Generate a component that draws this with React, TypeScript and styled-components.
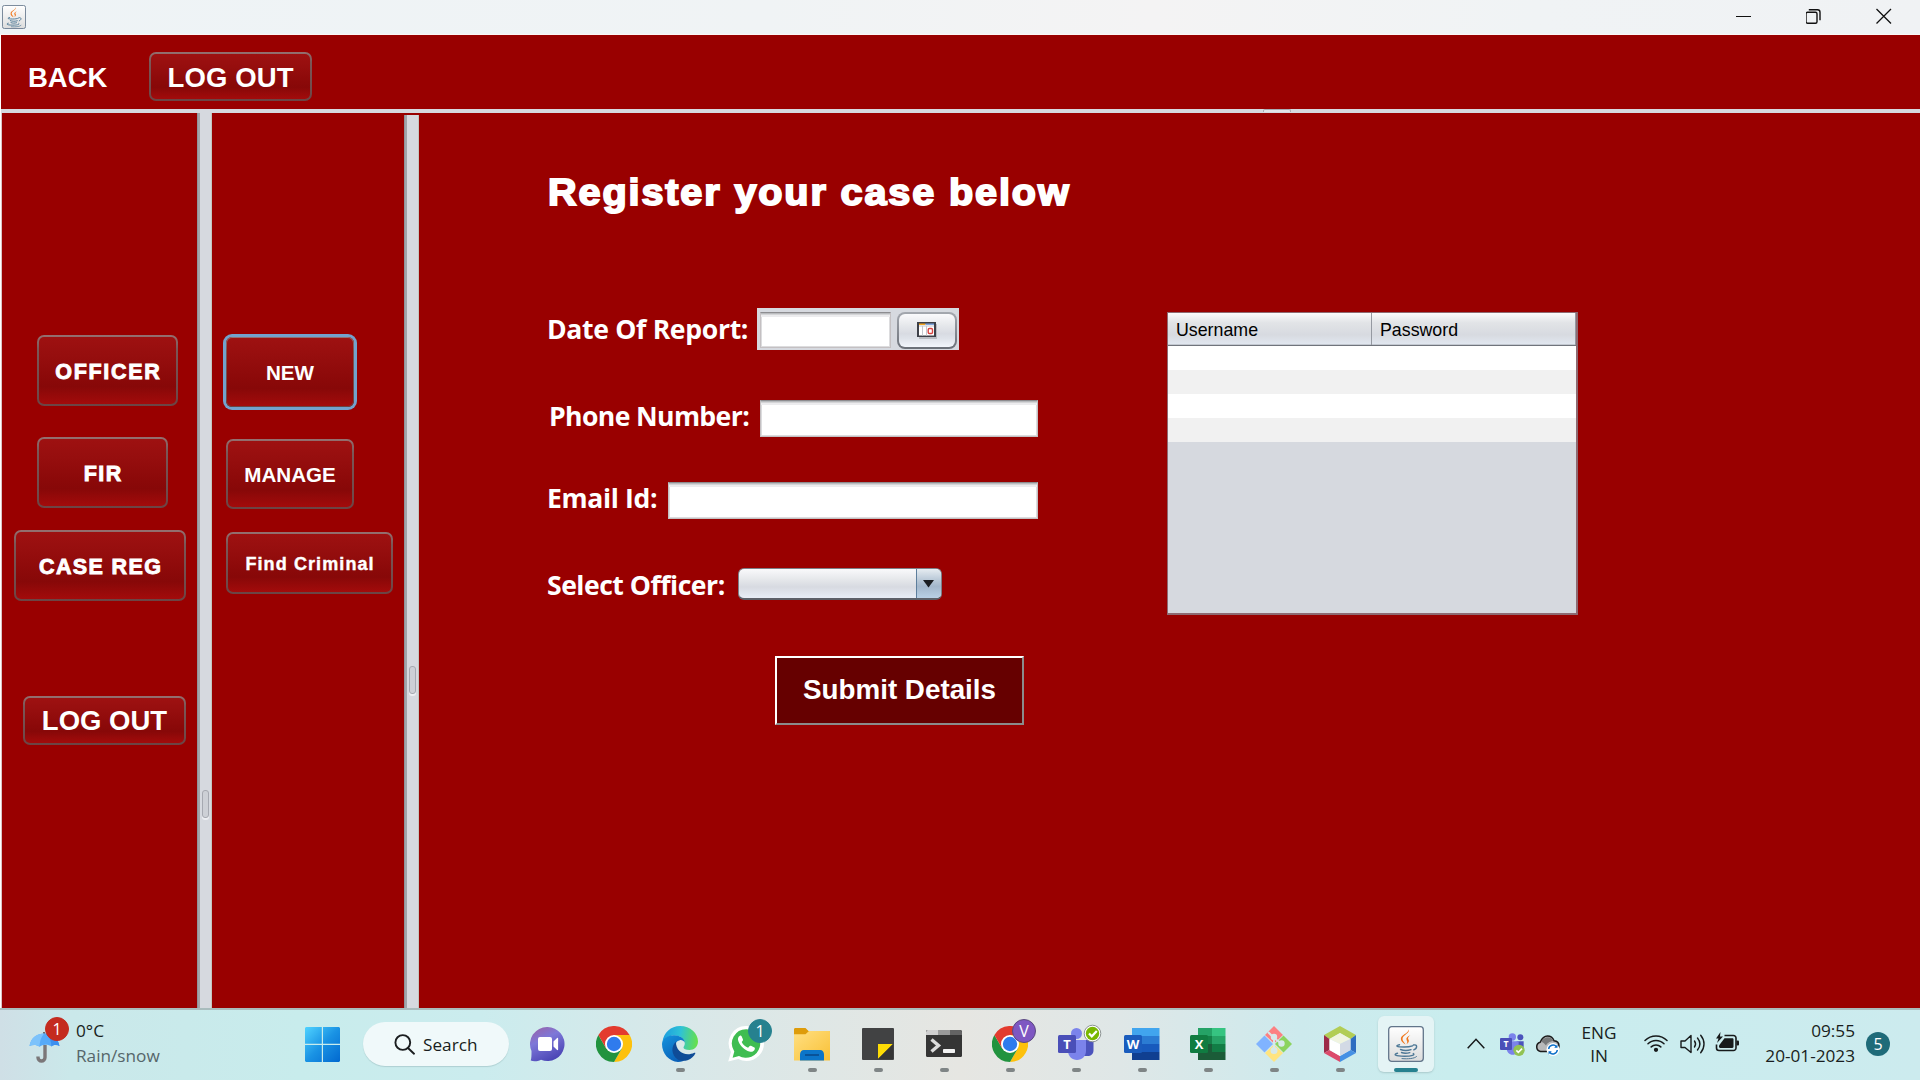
import React from 'react';
import styled, { createGlobalStyle, css } from 'styled-components';

const RED = '#990000';
const CHROME = '#d6d9df';
const ARIAL = "'Liberation Sans', Arial, sans-serif";
const SEGOE = "'Open Sans', 'Noto Sans', sans-serif";

const GlobalStyle = createGlobalStyle`
  * { box-sizing: border-box; }
  html, body { margin: 0; padding: 0; background: #fff; }
  body { width: 1920px; height: 1080px; overflow: hidden; }
  svg { display: block; flex: none; }
  button { margin: 0; font: inherit; }
`;

const Screen = styled.div`
  width: 1920px;
  height: 1080px;
  display: flex;
  flex-direction: column;
  overflow: hidden;
`;

/* ---------- window chrome ---------- */

const TitleBar = styled.header`
  height: 35px;
  flex: none;
  display: flex;
  justify-content: space-between;
  padding: 5px 28px 0 2px;
  background: linear-gradient(90deg, #eef3f6 0%, #f0f3f5 40%, #f4f3f4 60%, #f0f3f5 80%, #f0f2f4 100%);
  border-bottom: 1px solid #fbf6f6;
`;

const WindowControls = styled.div`
  display: flex;
  gap: 54px;
  padding-top: 3px;
`;

const ToolBar = styled.div`
  height: 74px;
  flex: none;
  display: flex;
  margin-left: 1px;
  padding: 17px 0 0 27px;
  background: ${RED};
`;

const BackLabel = styled.div`
  width: 121px;
  color: #fff;
  font: bold 27.5px/51px ${ARIAL};
`;

const HorizontalSplit = styled.div`
  height: 4px;
  flex: none;
  margin-left: 1px;
  padding-left: 1262px;
  background: ${CHROME};
`;

const HorizontalGrip = styled.div`
  width: 28px;
  height: 3px;
  border: 1px solid #a9acb3;
  border-bottom: 0;
  border-radius: 2px 2px 0 0;
  background: #e2e4e8;
`;

const Workspace = styled.div`
  height: 895px;
  flex: none;
  display: flex;
  padding-left: 2px;
  background: ${RED};
  box-shadow: inset 1px 0 #fff, inset 2px 0 #d9c4c6;
`;

const SideColumn = styled.nav<{ $width: number }>`
  width: ${p => p.$width}px;
  flex: none;
  display: flex;
  flex-direction: column;
  align-items: flex-start;
  padding-top: 222px;
`;

const Splitter = styled.div<{ $top: number; $grip: number }>`
  width: 15px;
  flex: none;
  margin-top: ${p => p.$top}px;
  padding: ${p => p.$grip}px 0 0 5px;
  background: linear-gradient(90deg, #91949b 0 1px, #a2a5ab 1px 3px, ${CHROME} 3px 14px, #c4c6bf 14px 15px);
`;

const Grip = styled.div`
  width: 7px;
  height: 28px;
  border: 1.500px solid #a6a9b1;
  border-radius: 3px;
  background: #cdd0d6;
  box-shadow: 0 2px 0 #eceef2;
`;

const FACE = {
  plain: css`font-weight: bold;`,
  black: css`font-weight: bold; -webkit-text-stroke: 0.9px #fff;`,
  blackSmall: css`font-weight: bold; -webkit-text-stroke: 0.4px #fff;`,
};

const GlassButton = styled.button<{
  $w: number; $h: number; $ml?: number; $mt?: number; $size: number;
  $face?: 'plain' | 'black' | 'blackSmall'; $spacing?: number; $focus?: boolean; $lift?: number;
}>`
  width: ${p => p.$w}px;
  height: ${p => p.$h}px;
  flex: none;
  margin: ${p => p.$mt ?? 0}px 0 0 ${p => p.$ml ?? 0}px;
  padding: ${p => p.$lift ?? 2}px 0 0 ${p => p.$spacing ?? 0}px;
  display: flex;
  align-items: center;
  justify-content: center;
  white-space: nowrap;
  color: #fff;
  font-family: ${ARIAL};
  font-size: ${p => p.$size}px;
  letter-spacing: ${p => p.$spacing ?? 0}px;
  ${p => FACE[p.$face ?? 'plain']}
  border: 2px solid transparent;
  border-radius: 7px;
  background:
    linear-gradient(180deg, #9e1111 0%, #960e0e 28%, #8b0909 62%, #870808 74%, #a30b0b 100%) padding-box,
    linear-gradient(180deg, #957070 0%, #7b5656 20%, #704a4a 80%, #6b4444 100%) border-box;
  ${p => p.$focus && css`
    margin-left: ${(p.$ml ?? 0) + 2}px;
    margin-top: ${(p.$mt ?? 0) + 2}px;
    border-width: 1px;
    box-shadow: 0 0 0 3px #72a2cd;
    border-radius: 6px;
  `}
`;

/* ---------- registration form ---------- */

const Content = styled.main`
  flex: 1;
  padding: 58px 0 0 128px;
`;

const Heading = styled.h1`
  width: 640px;
  margin: 0;
  padding-left: 1px;
  color: #fff;
  font: bold 36px/44px ${ARIAL};
  letter-spacing: 1.7px;
  white-space: nowrap;
  -webkit-text-stroke: 1.8px #fff;
  transform: scaleX(1.1);
  transform-origin: left;
`;

const Panels = styled.div`
  display: flex;
  align-items: flex-start;
  gap: 129px;
  margin-top: 93px;
`;

const Form = styled.div`
  width: 491px;
  display: flex;
  flex-direction: column;
`;

const Row = styled.div<{ $gap: number }>`
  height: 42px;
  margin-bottom: ${p => p.$gap}px;
  display: flex;
  justify-content: flex-start;
`;

const Label = styled.label<{ $w: number; $indent?: number; $spacing: number; $drop?: number }>`
  width: ${p => p.$w}px;
  flex: none;
  padding-left: ${p => p.$indent ?? 0}px;
  padding-top: ${p => p.$drop ?? 0}px;
  color: #fff;
  font: bold 26.6px/42px ${SEGOE};
  letter-spacing: ${p => p.$spacing}px;
  white-space: nowrap;
`;

const Field = styled.div<{ $w: number; $h: number; $mt: number }>`
  width: ${p => p.$w}px;
  height: ${p => p.$h}px;
  margin-top: ${p => p.$mt}px;
  flex: none;
  background: #fff;
  border: 1px solid #c4c0c2;
  border-top-color: #8d8d90;
  box-shadow: inset 0 1px #b9bbbe, inset 0 2px #d4d5d7, inset 0 4px #ececee, inset 1px 0 #dcdcde, inset -1px 0 #dcdcde, inset 0 -1px #dcdcde;
`;

const DateChooser = styled.div`
  width: 202px;
  height: 42px;
  display: flex;
  justify-content: space-between;
  padding: 0 2px 0 3px;
  background: ${CHROME};
`;

const CalendarButton = styled.button`
  width: 60px;
  height: 37px;
  margin-top: 4px;
  padding: 0;
  display: flex;
  align-items: center;
  justify-content: center;
  border: 2px solid transparent;
  border-radius: 8px;
  background:
    linear-gradient(180deg, #fafafc 0%, #e8eaed 30%, #d8dbe2 60%, #dfe3ea 75%, #f3f6fc 100%) padding-box,
    linear-gradient(180deg, #a4a8af, #6b7078) border-box;
`;

const Combo = styled.div`
  width: 204px;
  height: 32px;
  margin-top: 5px;
  display: flex;
  justify-content: flex-end;
  overflow: hidden;
  border: 1px solid #7d8088;
  border-bottom: 2px solid #5d6068;
  border-radius: 6px;
  background: linear-gradient(180deg, #f9f9fb 0%, #e6e8eb 35%, #d7dae1 62%, #e8edf6 100%);
`;

const ComboArrow = styled.div`
  width: 25px;
  display: flex;
  align-items: center;
  justify-content: center;
  padding-right: 1px;
  border-left: 1px solid #5d7e9c;
  background: linear-gradient(180deg, #e6ecf1 0%, #bccbd9 35%, #a3b7cb 60%, #b9d0e5 100%);
`;

const Submit = styled.button`
  width: 249px;
  height: 69px;
  margin: 9px 0 0 228px;
  padding: 0 0 2px;
  color: #fff;
  background: #660000;
  border: 2px solid;
  border-color: #fff #8b8b8b #8b8b8b #fff;
  font: bold 27.8px/60px ${ARIAL};
`;

const Table = styled.div`
  width: 411px;
  height: 303px;
  margin-top: 4px;
  display: flex;
  flex-direction: column;
  border: 1px solid #8e6a72;
  border-right-width: 2px;
  border-bottom-width: 2px;
  background: ${CHROME};
`;

const HeadRow = styled.div`
  height: 33px;
  flex: none;
  display: grid;
  grid-template-columns: 204px 204px;
  grid-template-rows: 32px;
  border-bottom: 1px solid #70747c;
`;

const HeadCell = styled.div`
  height: 32px;
  padding-left: 8px;
  overflow: hidden;
  color: #000;
  font: 17.8px/34px ${ARIAL};
  border-right: 1px solid #9599a1;
  box-shadow: inset 0 -1px #c3c8d0;
  background: linear-gradient(180deg, #fbfbfc 0%, #e2e4e7 30%, #d7dae0 68%, #e2e8f1 100%);
`;

const Stripe = styled.div`
  height: 24px;
  flex: none;
  background: #fff;
  &:nth-child(odd) { background: #f1f1f1; }
`;

/* ---------- taskbar ---------- */

const TaskBar = styled.footer`
  height: 72px;
  flex: none;
  display: flex;
  border-top: 2px solid #a9bcbd;
  font-family: ${SEGOE};
  color: #191e20;
  background: linear-gradient(90deg, #cfdfe6 0px, #cae8ea 70px, #c8ecec 300px, #cbecee 480px, #d8e8e9 680px, #e6e6e2 960px, #dfe7e7 1120px, #cdeaed 1300px, #c9edee 1450px, #ccebee 1920px);
`;

const Weather = styled.div`
  width: 305px;
  display: flex;
  padding: 7px 0 0 28px;
`;

const WeatherIcon = styled.div`
  position: relative;
  width: 48px;
`;

const Badge = styled.span<{ $bg: string; $x: number; $y: number; $ring?: string }>`
  position: absolute;
  left: ${p => p.$x}px;
  top: ${p => p.$y}px;
  width: 24px;
  height: 24px;
  border-radius: 50%;
  background: ${p => p.$bg};
  border: 1px solid ${p => p.$ring ?? p.$bg};
  color: #fff;
  font-size: 16px;
  line-height: 22px;
  text-align: center;
`;

const Lines = styled.div<{ $align?: string; $w?: number; $lh?: number; $pt?: number }>`
  width: ${p => (p.$w ? `${p.$w}px` : 'auto')};
  flex: none;
  padding-top: ${p => p.$pt ?? 0}px;
  font-size: 17.2px;
  line-height: ${p => p.$lh ?? 24.5}px;
  text-align: ${p => p.$align ?? 'left'};
  white-space: nowrap;
`;

const Muted = styled.div`
  color: #56666a;
`;

const StartButton = styled.div`
  width: 35px;
  padding-top: 17px;
`;

const SearchPill = styled.div`
  width: 146px;
  height: 44px;
  margin: 12px 6px 0 23px;
  display: flex;
  align-items: center;
  gap: 8px;
  padding-left: 31px;
  border-radius: 22px;
  background: #f0f9fa;
  box-shadow: 0 1px 1px #aed0d2;
  font-size: 17.2px;
`;

const Task = styled.div<{ $active?: boolean }>`
  position: relative;
  width: 56px;
  height: 56px;
  flex: none;
  margin: 6px 5px 0;
  padding-top: 10px;
  display: flex;
  flex-direction: column;
  align-items: center;
  border-radius: 6px;
  ${p => p.$active && css`
    background: #e4f4f5;
    box-shadow: 0 1px 2px #a9c9cb;
  `}
`;

const Running = styled.span<{ $active?: boolean }>`
  width: ${p => (p.$active ? 24 : 9)}px;
  height: 5px;
  margin-top: 6px;
  border-radius: 3px;
  background: ${p => (p.$active ? '#26818f' : '#7f8586')};
`;

const Tray = styled.div`
  flex: 1;
  display: flex;
  padding-left: 28px;
`;

const TrayIcon = styled.div<{ $w: number; $pt: number; $pl?: number }>`
  width: ${p => p.$w}px;
  flex: none;
  padding-top: ${p => p.$pt}px;
  padding-left: ${p => p.$pl ?? 0}px;
`;

const NoticeCount = styled.div`
  width: 24px;
  height: 24px;
  margin: 22px 0 0 11px;
  border-radius: 50%;
  background: #1f6b79;
  color: #fff;
  font-size: 16px;
  line-height: 24px;
  text-align: center;
`;

/* ---------- drawings ---------- */

const JavaCup = ({ size }: { size: number }) => (
  <svg width={size} height={size} viewBox="0 0 36 36">
    <defs>
      <linearGradient id={`jb${size}`} x1="0" y1="0" x2="0" y2="1">
        <stop offset="0" stopColor="#ffffff" /><stop offset="1" stopColor="#dcdcdc" />
      </linearGradient>
    </defs>
    <rect x="0.7" y="0.7" width="34.6" height="34.6" rx="3" fill={`url(#jb${size})`} stroke="#62758a" strokeWidth="1.3" />
    <path d="M20.800 3.500c1.600 3.400-6.300 5.600-6.300 9.400 0 2.200 2 3.300 3 5.600-3.200-2-5-3.800-4.600-6.200.5-3.400 7.200-4.800 7.900-8.800z" fill="#f0761b" />
    <path d="M22.300 9.200c-3.200 1.400-4.500 2.800-3.700 4.700.5 1.300 1.300 2.100-.1 4.200 2.900-1.600 2.700-3.300 1.800-4.800-.8-1.400.3-2.800 2-4.100z" fill="#f0761b" />
    <g fill="none" stroke="#4e7896" strokeWidth="1.400" strokeLinecap="round">
      <path d="M11.500 18.700c-4.500 1-3.500 2.300 4.500 2.300 4 0 6.500-.4 8.500-1.200" />
      <path d="M12.500 23.500c3 1.200 7.500 1.100 10.500.2" />
      <path d="M13.500 26.500c2.400 1 5.500.9 8.300.1" />
      <path d="M25.500 19c4.200-1 4 3.500.3 4.900" />
      <path d="M9.500 27.300c-4.500 1-2.500 2.900 6.800 2.900 8 0 11-1.500 9-2.600" />
      <path d="M14 32.600c6 .6 12.500 0 14.500-2" strokeWidth="1" />
    </g>
  </svg>
);

const Chrome = () => (
  <svg width="36" height="36" viewBox="0 0 36 36">
    <path d="M18 9h15.600A18 18 0 0 1 18 36l7.800-13.500z" fill="#fdc10d" />
    <path d="M2.400 9A18 18 0 0 0 18 36l7.800-13.500L18 25 10.200 22.500z" fill="#22933f" />
    <path d="M2.400 9A18 18 0 0 1 33.600 9H18l-7.800 13.500z" fill="#e33b2e" />
    <circle cx="18" cy="18" r="9" fill="#fff" />
    <circle cx="18" cy="18" r="7.200" fill="#2f7bed" />
  </svg>
);

const Umbrella = () => (
  <svg width="32" height="46" viewBox="0 0 32 46">
    <path d="M16 15v2" stroke="#444" strokeWidth="1.500" />
    <path d="M17 28v12.500a3.500 3.500 0 0 1-7 0v-1" fill="none" stroke="#7b7779" strokeWidth="3.400" />
    <path d="M1.500 29C3 20 10 16.500 16.500 16.500S30 20 31.500 29c-3-1.700-6-1.700-8 .5-3-2.500-9-2.500-12 .2-3-2.300-6.500-2.300-10-.7z" fill="#56aaf8" />
    <path d="M11.500 29.500c.5-7 2.500-11 5-13-8 0-13.500 4-15 12.500 3-1.500 7-1.500 10 .5z" fill="#7cc2fb" />
    <path d="M17 16.500c3.500 2 6 6 6.500 13 2-2 5-2 8-.5-1.500-8.500-7-12.500-14.500-12.500z" fill="#3a8ff0" />
  </svg>
);

const WindowsLogo = () => (
  <svg width="35" height="35" viewBox="0 0 35 35">
    <defs>
      <linearGradient id="win" x1="0" y1="0" x2="1" y2="1">
        <stop offset="0" stopColor="#50d3ff" /><stop offset="0.500" stopColor="#1a93e4" /><stop offset="1" stopColor="#0168cf" />
      </linearGradient>
    </defs>
    <path d="M1 0h15.800v16.800H0V1zM18 0h16l1 1v15.800H18zM0 18h16.800v17H1l-1-1zM18 18h17v16l-1 1H18z" fill="url(#win)" />
  </svg>
);

const Magnifier = () => (
  <svg width="21" height="21" viewBox="0 0 21 21" fill="none" stroke="#1b1e20" strokeWidth="1.900" strokeLinecap="round">
    <circle cx="8.800" cy="8.500" r="7.400" /><path d="m14 14 6 5.700" />
  </svg>
);

const VideoChat = () => (
  <svg width="36" height="36" viewBox="0 0 36 36">
    <defs>
      <linearGradient id="vc" x1="0.100" y1="0" x2="0.600" y2="1">
        <stop offset="0" stopColor="#9a63a8" /><stop offset="0.400" stopColor="#7e78d8" /><stop offset="1" stopColor="#4a45b5" />
      </linearGradient>
    </defs>
    <path d="M17.500 1a17 17 0 1 1-6.500 32.700C7.500 35.500 3.500 35.500.7 34.600 1.500 32 1.500 29.500 1.500 25A17 17 0 0 1 17.500 1z" fill="url(#vc)" />
    <rect x="8" y="11" width="14" height="14" rx="2" fill="#fff" />
    <path d="M23.500 15.500 27.100 12c.5-.4 1 0 1 .5v11c0 .5-.5.900-1 .5L23.500 20.500z" fill="#fff" />
  </svg>
);

const Edge = () => (
  <svg width="36" height="36" viewBox="0 0 36 36">
    <defs>
      <linearGradient id="e1" x1="0" y1="0.300" x2="1" y2="0.400">
        <stop offset="0" stopColor="#1c9de0" /><stop offset="0.500" stopColor="#2fc2d6" /><stop offset="1" stopColor="#66e04c" />
      </linearGradient>
      <linearGradient id="e2" x1="0" y1="0" x2="0.600" y2="1">
        <stop offset="0" stopColor="#1593dd" /><stop offset="1" stopColor="#0a60b8" />
      </linearGradient>
    </defs>
    <path d="M.5 16C1.500 6.500 9 0 18 0c10.500 0 18 7.500 18 15.500 0 5-4 8.500-8.500 8.500-4 0-6-1.300-6-2.500s1.300-1.800 1.300-4.300C22.800 13 18 9.500 12.500 9.500 7 9.500 2.500 12 .5 16z" fill="url(#e1)" />
    <path d="M0 18C.3 12.500 6 9.300 12 9.300c5.500 0 10.500 3 10.800 7.200-1-1.700-3-2.700-5-2.300-3.800.8-5.300 4.300-4.600 8.300 1 5.500 5.800 9.500 10.800 10.500-2.300 2-4 3-8 3C7 35.500 0 27.500 0 18z" fill="url(#e2)" />
    <path d="M14 15.800c-5 4.200-5 13 1.500 17.500 2.500 1.700 6.500 2 10 .9 4-1.300 6.500-4.200 7.800-6.700.3-.7-.3-1-1-.7-9 4.300-18.800-1.300-18.300-11z" fill="#0f4c97" />
  </svg>
);

const WhatsApp = () => (
  <svg width="36" height="36" viewBox="0 0 36 36">
    <path d="M18.500 0A17.300 17.300 0 0 1 18.500 35c-3 0-5.700-.7-8.200-2L.2 35.600 3 26A17.400 17.400 0 0 1 18.500 0z" fill="#fff" />
    <path d="M18.500 3.200A14.300 14.300 0 1 1 11 30l-6.400 1.700 1.700-6.300A14.300 14.300 0 0 1 18.500 3.200z" fill="#3fbd51" />
    <path d="M12.300 9.500c-2.300 1-3 3.500-1.700 6.300 2 4.500 6 8.300 10.800 9.800 2.600.8 5-.6 5.400-2.700.2-1-.1-1.300-.9-1.700l-2.900-1.400c-.7-.3-1.200-.2-1.600.4l-1.300 1.600c-2.800-1.100-5-3.100-6.400-5.800l1-1.300c.4-.5.4-1 .2-1.500l-1.300-3c-.3-.6-.7-.8-1.300-.7z" fill="#fff" />
  </svg>
);

const Explorer = () => (
  <svg width="36" height="36" viewBox="0 0 36 36">
    <defs>
      <linearGradient id="fx" x1="0" y1="0" x2="1" y2="1">
        <stop offset="0" stopColor="#ffdf82" /><stop offset="1" stopColor="#f9c136" />
      </linearGradient>
    </defs>
    <path d="M0 3.500C0 2.500.6 2 1.500 2h10l3 3H35.500v9H0z" fill="#de9c0b" />
    <path d="M0 8.200h11.500L15 5h20c.6 0 1 .4 1 1v28.500H0z" fill="url(#fx)" />
    <path d="M6 34.500v-6C6 26 7.500 24 10 24h16c2.500 0 4 2 4 4.500v6z" fill="#0c75c9" />
    <path d="M11 29h14" stroke="#0a4f92" strokeWidth="1.800" />
  </svg>
);

const StickyNotes = () => (
  <svg width="36" height="36" viewBox="0 0 36 36">
    <rect x="2" y="2" width="32" height="32" rx="1" fill="#414243" />
    <path d="M18 18h15L18 33z" fill="#fddc05" />
    <path d="M33 18v15H18z" fill="#353535" />
  </svg>
);

const Terminal = () => (
  <svg width="36" height="36" viewBox="0 0 36 36">
    <rect x="0" y="4" width="36" height="27" rx="1.500" fill="#353535" />
    <path d="M1.500 4H12v5H0V5.500z" fill="#cfcfcf" />
    <path d="M12 4h12v5H12z" fill="#9a9a9a" />
    <path d="M24 4h10.500L36 5.500V9H24z" fill="#646464" />
    <path d="m5.500 13.500 7 6-7 6" fill="none" stroke="#dcdcdc" strokeWidth="3.400" />
    <rect x="17" y="23" width="12" height="4" rx=".8" fill="#f3f3f3" />
  </svg>
);

const OfficeText = styled.text`
  font: bold 13px ${SEGOE};
  fill: #fff;
  text-anchor: middle;
`;

const Teams = ({ size, small }: { size: number; small?: boolean }) => (
  <svg width={size} height={size} viewBox="0 0 36 36" overflow="visible">
    <circle cx="30.500" cy="8" r="4.500" fill="#4b53bc" />
    <circle cx="18.500" cy="7.500" r="5.500" fill="#7b83eb" />
    <path d="M25 14h10.500v10c0 4-2.500 6-6 6H25z" fill="#4b53bc" />
    <path d="M10 14h18v11c0 5-4 9-9 9s-9-4-9-9z" fill="#7b83eb" />
    <rect x="0" y="9" width="18" height="18" rx="1.500" fill="#4a4fb8" />
    <OfficeText x="9" y="22.700">T</OfficeText>
    {small ? (
      <g><circle cx="28.500" cy="27.500" r="8.500" fill="#92c353" /><path d="m24.500 27.500 3 3 5.500-5.500" fill="none" stroke="#fff" strokeWidth="2.400" /></g>
    ) : (
      <g><circle cx="34.500" cy="7.500" r="8.300" fill="#fff" stroke="#8b9292" strokeWidth="1" /><circle cx="34.500" cy="7.500" r="6.700" fill="#79b700" /><path d="m31 7.500 2.800 2.800 5-5.300" fill="none" stroke="#fff" strokeWidth="2.200" /></g>
    )}
  </svg>
);

const WordDoc = () => (
  <svg width="36" height="36" viewBox="0 0 36 36">
    <rect x="8" y="2" width="27.500" height="8" fill="#41a5ee" />
    <rect x="8" y="10" width="27.500" height="8" fill="#2b7cd3" />
    <rect x="8" y="18" width="27.500" height="8" fill="#185abd" />
    <rect x="8" y="26" width="27.500" height="8" fill="#103f91" />
    <rect x="0" y="9" width="18" height="18" rx="1.500" fill="#1a5cbd" />
    <OfficeText x="9" y="22.700">W</OfficeText>
  </svg>
);

const ExcelDoc = () => (
  <svg width="36" height="36" viewBox="0 0 36 36">
    <rect x="8" y="2" width="14" height="8" fill="#25a266" /><rect x="22" y="2" width="13.500" height="8" fill="#36c481" />
    <rect x="8" y="10" width="14" height="8" fill="#158048" /><rect x="22" y="10" width="13.500" height="8" fill="#26a366" />
    <rect x="8" y="18" width="14" height="8" fill="#1b5c38" /><rect x="22" y="18" width="13.500" height="8" fill="#127d45" />
    <rect x="8" y="26" width="27.500" height="8" fill="#1b5c38" />
    <rect x="0" y="9" width="18" height="18" rx="1.500" fill="#107c41" />
    <OfficeText x="9" y="22.700">X</OfficeText>
  </svg>
);

const GitLogo = () => (
  <svg width="36" height="36" viewBox="0 0 36 36">
    <path d="M18 0 27 9 18 17.500 9 9z" fill="#fc8082" />
    <path d="M8.500 9.500 17 18 8.500 26.500 0 18z" fill="#80b3ff" />
    <path d="M27.500 9.500 36 18 27.500 26.500 19 18z" fill="#8cd35f" />
    <path d="M18 18.500 27 27 18 36 9 27z" fill="#ffe480" />
    <g stroke="#d7e9ea" strokeWidth="2" fill="#d7e9ea">
      <path d="m12 6 6 6v12M18 12l8 6" fill="none" />
      <circle cx="18" cy="11" r="2.200" /><circle cx="18" cy="24.500" r="2.500" /><circle cx="25.500" cy="17.500" r="2.200" />
    </g>
  </svg>
);

const NetBeans = () => (
  <svg width="36" height="36" viewBox="0 0 36 36">
    <path d="M18 0 34 9l-5.500 4L18 7 7.500 13 2 9z" fill="#b2cd55" />
    <path d="M2 9l5.500 4v11L2 27z" fill="#9d2b49" />
    <path d="M2 27l5.500-3L18 30v6z" fill="#dc4a6b" />
    <path d="M34 9l-5.500 4v11l5.500 3z" fill="#2f6dc0" />
    <path d="M34 27l-5.500-3L18 30v6z" fill="#4590e4" />
    <path d="M18 7l10.500 6L18 18 7.500 13z" fill="#f0f4e0" />
    <path d="M7.500 13 18 18v12L7.500 24z" fill="#fff" />
    <path d="M28.500 13 18 18v12l10.500-6z" fill="#d3dae5" />
  </svg>
);

const CloudSync = () => (
  <svg width="25" height="22" viewBox="0 0 25 22">
    <path d="M5.500 17.500a4.800 4.800 0 0 1-.3-9.300C7 4 9.500 2 12.500 2c3.300 0 5.500 2 6.500 4.700 3 .3 5 2.500 5 5.300s-2 5.500-5 5.500z" fill="#b8babb" stroke="#1a1a1a" strokeWidth="1.500" />
    <path d="M6 8c2-4.500 9-7.500 12.500-1C14 7.500 12 9.500 11 11.500 9.500 9.500 8 8.200 6 8z" fill="#77797a" />
    <circle cx="18" cy="15.500" r="6.500" fill="#fff" />
    <path d="M13.700 15a4.400 4.400 0 0 1 7.800-2.300M22.300 16a4.400 4.400 0 0 1-7.800 2.300" fill="none" stroke="#0d70c8" strokeWidth="1.500" />
    <path d="M22.500 10.500v3.300h-3.300zM13.500 20.500v-3.300h3.300z" fill="#0d70c8" />
  </svg>
);

const Wifi = () => (
  <svg width="24" height="18" viewBox="0 0 24 18" fill="none" stroke="#171a1b" strokeWidth="1.500" strokeLinecap="round">
    <path d="M1 6.500a15.500 15.500 0 0 1 22 0M4 9.700a11.300 11.300 0 0 1 16 0M7.200 12.900a6.800 6.800 0 0 1 9.600 0" />
    <circle cx="12" cy="15.800" r="1.400" fill="#171a1b" />
  </svg>
);

const Volume = () => (
  <svg width="25" height="20" viewBox="0 0 25 20" fill="none" stroke="#171a1b" strokeWidth="1.400" strokeLinecap="round" strokeLinejoin="round">
    <path d="M1 7h4l6-5.500v17L5 13.500H1z" />
    <path d="M14.500 7c1.300 1.800 1.300 4.200 0 6M17.500 4c3 3.700 3 8.300 0 12M20.700 1.200c4.400 5.300 4.400 12.300 0 17.600" />
  </svg>
);

const Battery = () => (
  <svg width="25" height="20" viewBox="0 0 25 20">
    <path d="M9.500 3.500h9a2.500 2.500 0 0 1 2.500 2.500v10a2.500 2.500 0 0 1-2.500 2.500H4A2.500 2.500 0 0 1 1.500 16v-3.500" fill="none" stroke="#171a1b" strokeWidth="1.600" />
    <rect x="21.500" y="8.500" width="2.500" height="5" rx="1" fill="#171a1b" />
    <path d="M9.500 6.300h7.800c.7 0 1.200.5 1.200 1.200v7.300c0 .7-.5 1.200-1.200 1.200H5.200C4.500 16 4 15.500 4 14.800v-1.300z" fill="#171a1b" />
    <path d="M5.500 0 1 6.500h2.500L2 11l6-6.500H5z" fill="#171a1b" />
  </svg>
);

const CalendarIcon = () => (
  <svg width="20" height="17" viewBox="0 0 20 17">
    <rect x="2" y="2" width="18" height="15" fill="#b9bcc1" />
    <rect x="0" y="0" width="19" height="15" fill="#3d4048" />
    <rect x="2" y="2" width="15" height="11.500" fill="#fff" />
    <rect x="2" y="1.500" width="6.500" height="1.500" fill="#f5a623" /><rect x="8.500" y="1.500" width="8.500" height="1.500" fill="#7fa5dd" />
    <path d="M5.500 4v9.500M9.500 4v9.500M2 4h15" stroke="#c5c8ce" />
    <rect x="11.200" y="6.500" width="4.300" height="5" rx="1.200" fill="none" stroke="#d9433f" strokeWidth="1.400" />
  </svg>
);

export default function App() {
  return (
    <Screen>
      <GlobalStyle />
      <TitleBar>
        <JavaCup size={24} />
        <WindowControls>
          <svg width="16" height="16" viewBox="0 0 16 16"><path d="M0 8.500h15" stroke="#111" /></svg>
          <svg width="16" height="16" viewBox="0 0 16 16" fill="none" stroke="#111" strokeWidth="1.400">
            <rect x="0" y="4.200" width="11" height="11" rx="1.500" /><path d="M2.800 1.700h8.700a2.500 2.500 0 0 1 2.500 2.500v8" />
          </svg>
          <svg width="16" height="16" viewBox="0 0 16 16" stroke="#111" strokeWidth="1.300"><path d="m.5 1 14.500 14.500M15 1 .5 15.500" /></svg>
        </WindowControls>
      </TitleBar>

      <ToolBar>
        <BackLabel>BACK</BackLabel>
        <GlassButton $w={163} $h={49} $size={27.5} $lift={2} $spacing={0.1}>LOG OUT</GlassButton>
      </ToolBar>
      <HorizontalSplit><HorizontalGrip /></HorizontalSplit>

      <Workspace>
        <SideColumn $width={195}>
          <GlassButton $w={141} $h={71} $ml={35} $size={21.5} $face="black" $spacing={1.7} $lift={3}>OFFICER</GlassButton>
          <GlassButton $w={131} $h={71} $ml={35} $mt={31} $size={21.5} $face="black" $spacing={1.5} $lift={3}>FIR</GlassButton>
          <GlassButton $w={172} $h={71} $ml={12} $mt={22} $size={21.5} $face="black" $spacing={1.35} $lift={3}>CASE REG</GlassButton>
          <GlassButton $w={163} $h={49} $ml={21} $mt={95} $size={27.5} $lift={1}>LOG OUT</GlassButton>
        </SideColumn>
        <Splitter $top={0} $grip={677}><Grip /></Splitter>
        <SideColumn $width={192}>
          <GlassButton $w={128} $h={70} $ml={12} $size={20.6} $focus $lift={2}>NEW</GlassButton>
          <GlassButton $w={128} $h={70} $ml={14} $mt={32} $size={20.6} $lift={2}>MANAGE</GlassButton>
          <GlassButton $w={167} $h={62} $ml={14} $mt={23} $size={18} $face="blackSmall" $spacing={1.1} $lift={2}>Find Criminal</GlassButton>
        </SideColumn>
        <Splitter $top={2} $grip={551}><Grip /></Splitter>

        <Content>
          <Heading>Register your case below</Heading>
          <Panels>
            <Form>
              <Row $gap={45}>
                <Label $w={210} $spacing={-0.33}>Date Of Report:</Label>
                <DateChooser>
                  <Field $w={131} $h={36} $mt={4} />
                  <CalendarButton><CalendarIcon /></CalendarButton>
                </DateChooser>
              </Row>
              <Row $gap={40}>
                <Label $w={213} $indent={2} $spacing={-0.62}>Phone Number:</Label>
                <Field $w={278} $h={37} $mt={5} />
              </Row>
              <Row $gap={44}>
                <Label $w={121} $spacing={-0.35}>Email Id:</Label>
                <Field $w={370} $h={37} $mt={5} />
              </Row>
              <Row $gap={42}>
                <Label $w={191} $spacing={-0.5} $drop={1}>Select Officer:</Label>
                <Combo>
                  <ComboArrow>
                    <svg width="11" height="8" viewBox="0 0 11 8"><path d="M0 0h11L5.500 7.500z" fill="#1b1e22" /></svg>
                  </ComboArrow>
                </Combo>
              </Row>
              <Submit>Submit Details</Submit>
            </Form>
            <Table>
              <HeadRow><HeadCell>Username</HeadCell><HeadCell>Password</HeadCell></HeadRow>
              <Stripe /><Stripe /><Stripe /><Stripe />
            </Table>
          </Panels>
        </Content>
      </Workspace>

      <TaskBar>
        <Weather>
          <WeatherIcon><Umbrella /><Badge $bg="#c42b1f" $x={17} $y={0}>1</Badge></WeatherIcon>
          <Lines $pt={2}><div>0°C</div><Muted>Rain/snow</Muted></Lines>
        </Weather>
        <StartButton><WindowsLogo /></StartButton>
        <SearchPill><Magnifier />Search</SearchPill>
        <Task><VideoChat /></Task>
        <Task><Chrome /></Task>
        <Task><Edge /><Running /></Task>
        <Task><WhatsApp /><Badge $bg="#26818f" $x={30} $y={3}>1</Badge></Task>
        <Task><Explorer /><Running /></Task>
        <Task><StickyNotes /><Running /></Task>
        <Task><Terminal /><Running /></Task>
        <Task><Chrome /><Running /><Badge $bg="#7e57c2" $ring="#5b4a80" $x={30} $y={3}>V</Badge></Task>
        <Task><Teams size={36} /><Running /></Task>
        <Task><WordDoc /><Running /></Task>
        <Task><ExcelDoc /><Running /></Task>
        <Task><GitLogo /><Running /></Task>
        <Task><NetBeans /><Running /></Task>
        <Task $active><JavaCup size={36} /><Running $active /></Task>
        <Tray>
          <TrayIcon $w={33} $pt={28}>
            <svg width="18" height="11" viewBox="0 0 18 11" fill="none" stroke="#171a1b" strokeWidth="1.500"><path d="m.7 10.300 8.300-9 8.300 9" /></svg>
          </TrayIcon>
          <TrayIcon $w={35} $pt={22}><Teams size={24} small /></TrayIcon>
          <TrayIcon $w={40} $pt={24}><CloudSync /></TrayIcon>
          <Lines $w={48} $align="center" $lh={22.5} $pt={12}><div>ENG</div><div>IN</div></Lines>
          <TrayIcon $w={57} $pt={24} $pl={21}><Wifi /></TrayIcon>
          <TrayIcon $w={35} $pt={24}><Volume /></TrayIcon>
          <TrayIcon $w={40} $pt={22}><Battery /></TrayIcon>
          <Lines $w={100} $align="right" $pt={9}><div>09:55</div><div>20-01-2023</div></Lines>
          <NoticeCount>5</NoticeCount>
        </Tray>
      </TaskBar>
    </Screen>
  );
}
